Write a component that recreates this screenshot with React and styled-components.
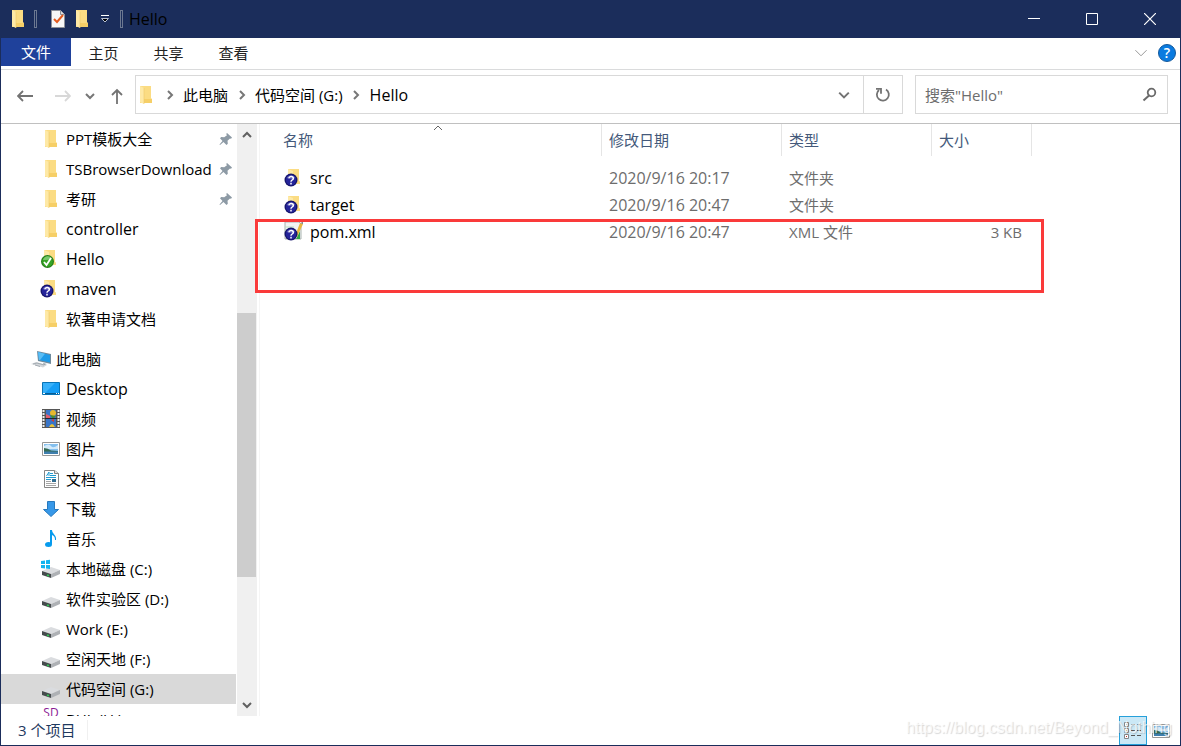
import React from "react";
import styled, { createGlobalStyle, css } from "styled-components";

const GlobalStyle = createGlobalStyle`
  * {
    box-sizing: border-box;
  }

  body {
    margin: 0;
    color: #000;
    background: #fff;
    font: 15px/20px "Open Sans", "Noto Sans CJK SC", sans-serif;
  }

  button,
  input {
    margin: 0;
    padding: 0;
    border: 0;
    background: none;
    font: inherit;
    color: inherit;
  }

  a {
    color: inherit;
    text-decoration: none;
  }

  svg {
    display: block;
    flex: none;
  }
`;

const Window = styled.div`
  display: flex;
  flex-direction: column;
  height: 100vh;
  border: 1px solid #1b2d5b;
  border-top: 0;
  overflow: hidden;
`;

const TitleBar = styled.header`
  display: flex;
  align-items: center;
  flex: none;
  height: 38px;
  padding: 0 1px 0 9px;
  background: #1b2d5b;
`;

const QuickButton = styled.button`
  display: flex;
  align-items: center;
  justify-content: center;
  width: ${(props) => (props.$narrow ? 20 : 25)}px;
  height: 24px;
`;

const Separator = styled.span`
  width: 3px;
  height: 18px;
  margin: 0 ${(props) => props.$after || 0}px 0 ${(props) => props.$before || 0}px;
  border: 1px solid #6c7891;
  background: #1b2d5b;
`;

const Title = styled.h1`
  flex: 1;
  margin: 0;
  font-size: 16px;
  font-weight: 400;
`;

const CaptionButton = styled.button`
  display: flex;
  align-items: center;
  justify-content: center;
  width: 58px;
  height: 38px;
`;

const Ribbon = styled.nav`
  display: flex;
  flex: none;
  height: 32px;
  border-bottom: 1px solid #dadbdc;
`;

const RibbonTab = styled.button`
  width: 65px;
  height: 30px;
  color: #222;

  ${(props) =>
    props.$file &&
    css`
      width: 70px;
      height: 28px;
      color: #fff;
      background: #1f419b;
    `}
`;

const RibbonTools = styled.div`
  display: flex;
  align-items: center;
  gap: 10px;
  height: 30px;
  margin-left: auto;
  padding-right: 4px;
`;

const HelpButton = styled.button`
  width: 18px;
  height: 18px;
  border: 1px solid #14599c;
  border-radius: 50%;
  color: #fff;
  background: #0a7be0;
  font-size: 14px;
  font-weight: 600;
  line-height: 16px;
`;

const AddressRow = styled.div`
  display: flex;
  align-items: center;
  flex: none;
  height: 54px;
  padding: 0 12px 4px 0;
  border-bottom: 1px solid #c0c0c0;
`;

const HistoryButtons = styled.div`
  display: flex;
  align-items: center;
  gap: 14px;
  width: 134px;
  padding: 2px 0 0 16px;

  button:first-child {
    margin-right: 8px;
  }
`;

const AddressBox = styled.div`
  display: flex;
  flex: 1;
  height: 39px;
  border: 1px solid #d9d9d9;
`;

const Crumbs = styled.div`
  display: flex;
  align-items: center;
  flex: 1;
  padding-left: 2px;
`;

const Crumb = styled.a`
  font-size: ${(props) => (props.$latin ? 16 : 15)}px;
`;

const CrumbArrow = styled.span`
  display: flex;
  justify-content: center;
  width: 27px;
`;

const BoxButton = styled.button`
  display: flex;
  align-items: center;
  justify-content: center;
  width: 39px;
  border-left: ${(props) => (props.$divided ? "1px solid #d9d9d9" : "0")};
`;

const SearchBox = styled.div`
  display: flex;
  align-items: center;
  width: 253px;
  height: 39px;
  margin-left: 12px;
  padding: 0 10px 0 9px;
  border: 1px solid #d9d9d9;

  input {
    flex: 1;
    min-width: 0;
    outline: 0;
  }

  input::placeholder {
    color: #6d6d6d;
    opacity: 1;
  }
`;

const Body = styled.div`
  display: flex;
  flex: 1;
  min-height: 0;
`;

const Sidebar = styled.nav`
  width: 235px;
  flex: none;
  overflow: hidden;
`;

const TreeList = styled.ul`
  margin: 0 0 10px;
  padding: 0;
  list-style: none;
`;

const TreeLink = styled.a`
  display: flex;
  align-items: center;
  height: 30px;
  padding: 0 3px 0 ${(props) => (props.$root ? 30 : 39)}px;
  background: ${(props) => (props.$selected ? "#d9d9d9" : "transparent")};
  font-size: ${(props) => (props.$latin ? 16 : 15)}px;
  white-space: nowrap;

  > :first-child {
    margin-right: ${(props) => (props.$root ? 3 : 4)}px;
  }

  > :nth-child(3) {
    margin-left: auto;
  }
`;

const ScrollTrack = styled.div`
  display: flex;
  flex-direction: column;
  align-items: center;
  justify-content: space-between;
  flex: none;
  width: 20px;
  margin-left: 1px;
  padding: 6px 0;
  background: linear-gradient(#cdcdcd, #cdcdcd) 0 189px / 19px 264px no-repeat
    #f0f0f0;
`;

const Main = styled.main`
  position: relative;
  flex: 1;
  min-width: 0;
  margin-left: 2px;
  border-left: 1px solid #f5f5f5;
`;

const FileTable = styled.table`
  width: 772px;
  table-layout: fixed;
  border-collapse: separate;
  border-spacing: 0;

  th {
    height: 32px;
    padding: 0 7px;
    border-right: 1px solid #e5e5e5;
    color: #44597a;
    font-weight: 400;
    text-align: left;
  }

  th:first-child {
    padding-left: 23px;
  }

  td {
    height: 27px;
    padding: 0 7px;
    color: #6d6d6d;
  }

  td:first-child {
    padding-left: 24px;
    color: #000;
  }

  td:nth-child(-n + 2) {
    font-size: 16px;
  }

  td:last-child {
    padding-right: 10px;
    text-align: right;
  }

  tbody::before {
    content: "";
    display: block;
    height: 8px;
  }
`;

const FileName = styled.a`
  display: flex;
  align-items: center;
  gap: 6px;
`;

const SortMark = styled.span`
  position: absolute;
  top: -1px;
  left: 173px;
`;

const Highlight = styled.div`
  position: absolute;
  top: 95px;
  left: -5px;
  width: 789px;
  height: 74px;
  border: 3px solid #fa3a3a;
`;

const StatusBar = styled.footer`
  position: relative;
  display: flex;
  align-items: center;
  flex: none;
  height: 29px;
  padding-left: 17px;
  color: #1f3a5f;
`;

const Count = styled.span`
  margin-bottom: 2px;
  padding-right: 12px;
  border-right: 1px solid #f0f0f0;
`;

const ViewButton = styled.button`
  display: flex;
  align-items: center;
  justify-content: center;
  width: 28px;
  height: 29px;
  margin-left: ${(props) => (props.$active ? "auto" : "0")};
  border: ${(props) => (props.$active ? "1px solid #26a0da" : "0")};
  background: ${(props) => (props.$active ? "#cbe8f6" : "transparent")};

  &:last-of-type {
    margin-right: 5px;
  }
`;

const Watermark = styled.span`
  position: absolute;
  right: 8px;
  bottom: 7px;
  color: rgba(255, 255, 255, 0.7);
  font: 16px/20px "Liberation Sans", sans-serif;
  text-shadow: 1px 1px 1px rgba(0, 0, 0, 0.16);
  pointer-events: none;
`;

const Chevron = ({ dir = "down", size = 10, color = "#606060", weight = 2 }) => {
  const paths = {
    down: "M1 3l4 4 4-4",
    up: "M1 7l4-4 4 4",
    right: "M3 1l4 4-4 4",
  };
  return (
    <svg width={size} height={size} viewBox="0 0 10 10" fill="none">
      <path d={paths[dir]} stroke={color} strokeWidth={(weight * 10) / size} />
    </svg>
  );
};

const Arrow = ({ dir, color = "#737373" }) => {
  const paths = {
    left: "M16 8H1M6 3L1 8l5 5",
    right: "M0 8h15M10 3l5 5-5 5",
    up: "M8 16V2M3 7l5-5 5 5",
  };
  return (
    <svg width="16" height="16" viewBox="0 0 16 16" fill="none">
      <path d={paths[dir]} stroke={color} strokeWidth="1.8" />
    </svg>
  );
};

const FolderShape = () => (
  <>
    <path d="M5 1h11v12l1 1v4H5z" fill="#fbdc83" />
    <path d="M5 1l4 2v16l-4-2z" fill="#fee9a6" />
    <path d="M9 14h8v4H9z" fill="#f6cf67" />
    <path d="M9 3v16" stroke="#efca6a" strokeWidth=".6" />
  </>
);

const FolderIcon = () => (
  <svg width="22" height="20" viewBox="0 0 22 20">
    <FolderShape />
  </svg>
);

const TitleFolderIcon = () => (
  <svg width="18" height="20" viewBox="3 0 18 20">
    <FolderShape />
  </svg>
);

const QuestionBadge = ({ x = 7, y = 13 }) => (
  <g transform={`translate(${x} ${y})`}>
    <circle r="6.5" fill="#15146b" />
    <circle r="5.2" fill="#25249a" />
    <path d="M-4.5-2a5 5 0 0 1 9 0q-4 2-9 0z" fill="#5d5db8" />
    <path
      d="M-2-1.7C-2-4 2.3-4 2.3-1.6 2.3 0 0 0 0 1.7M0 2.8v1.7"
      fill="none"
      stroke="#fff"
      strokeWidth="1.5"
    />
  </g>
);

const QuestionFolderIcon = ({ width = 22 }) => (
  <svg width={width} height="22" viewBox={`0 0 ${width} 22`}>
    <path d="M4 2h11v12l1 .5V17H6z" fill="#fbdc83" />
    <path d="M4 2l5 2v13l-5-2z" fill="#fee9a6" />
    <QuestionBadge y={13} />
  </svg>
);

const CheckFolderIcon = () => (
  <svg width="22" height="22" viewBox="0 0 22 22">
    <path d="M4 2h11v12l1 .5V17H6z" fill="#fbdc83" />
    <path d="M4 2l5 2v13l-5-2z" fill="#fee9a6" />
    <circle cx="7.5" cy="13.5" r="6.5" fill="#247d18" />
    <circle cx="7.5" cy="13.5" r="5.3" fill="#37a426" />
    <path d="M3 12a5 5 0 0 1 9-1.5q-4 2-9 1.5z" fill="#78c76b" />
    <path d="M4 14l2.5 3L11 10" fill="none" stroke="#fff" strokeWidth="1.8" />
  </svg>
);

const XmlIcon = () => (
  <svg width="20" height="22" viewBox="0 0 20 22">
    <path d="M1 1h14l2 2v15H1z" fill="#f2f5f4" stroke="#a9b3b0" />
    <path d="M12 18l4-8v8z" fill="#2fa646" />
    <path d="M11 15l5-13 3 1-6 13z" fill="#e8b73e" />
    <path d="M16 2l3-1v2z" fill="#777" />
    <path d="M1 6h9M1 9h7" stroke="#b9dfc0" />
    <QuestionBadge />
  </svg>
);

const PinIcon = () => (
  <svg width="14" height="14" viewBox="0 0 14 14" fill="#8d9aa5">
    <path d="M8 1l5 4.5-1 1.3-1-.3-2.5 2.3.3 3L7.500 13l-3-3L1 13l-.5-.5L3.500 9 1 6.300 2.200 5l3 .3L8 3.200 7.200 2z" />
  </svg>
);

const PcIcon = () => (
  <svg width="22" height="20" viewBox="0 0 22 20">
    <path d="M6 2l14 3v10L7 12z" fill="#6f8a9c" />
    <path d="M7 3l12 3v7.5L8 11z" fill="#1f9be8" />
    <path d="M7 3l7 1.700L9 11H8z" fill="#59bdf5" />
    <path d="M0 15l5-2 11 3-4 2.500z" fill="#d3d7db" />
    <path d="M2 15l4-1 7 2M4 16l5 1.500" stroke="#a4abb1" fill="none" />
    <path d="M12 14l4 1-3 1z" fill="#8b98a3" />
  </svg>
);

const DesktopIcon = () => (
  <svg width="22" height="20" viewBox="0 0 22 20">
    <path d="M2.500 3.500h17v12h-17z" fill="#159df5" stroke="#0873b5" />
    <path d="M3 4h12L5 14H3z" fill="#38b1fa" />
    <path d="M3 14.500h16" stroke="#075d93" />
    <path d="M3 14.500h2M16 14.500h1M18 14.500h1" stroke="#fff" />
  </svg>
);

const VideoIcon = () => (
  <svg width="22" height="20" viewBox="0 0 22 20">
    <path d="M2 0h18v19H2z" fill="#565656" />
    <path d="M3.500 1v18M18.500 1v18" stroke="#eee" strokeWidth="2" strokeDasharray="2 1" />
    <path d="M6 1h10v8H6zM6 10h10v8H6z" fill="#3975c8" />
    <path d="M6 5l4 2v2H6z" fill="#e25d6e" />
    <circle cx="13" cy="4" r="3" fill="#e6b82d" />
    <path d="M10 6l6 1-3 3z" fill="#4a8d2c" />
    <path d="M11 11l3-1v3z" fill="#d83b31" />
    <path d="M9 18q3-6 6 0z" fill="#e9c33a" />
    <path d="M5 9.500h12" stroke="#1f2732" />
  </svg>
);

const PictureIcon = () => (
  <svg width="22" height="20" viewBox="0 0 22 20">
    <path d="M2.500 3.500h17v13h-17z" fill="#fff" stroke="#979797" />
    <path d="M4 5h14v10H4z" fill="#83bfee" />
    <path d="M4 7q5-3 7 0t7-1v4H4z" fill="#d3eafa" />
    <path d="M4 9q4 0 7 2.500l7 .5v1H4z" fill="#356b55" />
    <path d="M4 12.500h14V15H4z" fill="#3f7fae" />
  </svg>
);

const DocumentIcon = () => (
  <svg width="22" height="20" viewBox="0 0 22 20">
    <path d="M4.500 1.500h10l4 3v14h-14z" fill="#fff" stroke="#858585" />
    <path d="M14.500 1.500v3h4" fill="#e5e5e5" stroke="#858585" />
    <path d="M6.500 7l2.500-4v4M10 4.500h3M10 6.500h6M6 8.500h10M6 10.500h5" stroke="#219bd0" fill="none" />
    <path d="M6 12.500h5M6 14.500h10M6 16.500h10" stroke="#a5a5a5" />
    <path d="M12 10h4v3h-4z" fill="#316d91" />
  </svg>
);

const DownloadIcon = () => (
  <svg width="22" height="20" viewBox="0 0 22 20">
    <path d="M7.500 2.500h7v8h4L11 17.500l-7.500-7h4z" fill="#3798e8" stroke="#2779bd" />
  </svg>
);

const MusicIcon = () => (
  <svg width="22" height="20" viewBox="0 0 22 20" fill="#079bed">
    <path d="M10 1h2c0 4 5 5 4 10h-1c0-3-1-4-3-5v9h-2z" />
    <ellipse cx="8.500" cy="15.500" rx="3.500" ry="2.500" />
  </svg>
);

const DriveIcon = ({ system }) => (
  <svg width="22" height="20" viewBox="0 0 22 20">
    <path d="M2 12l9-4 9 3-9 4z" fill="#dadcdf" />
    <path d="M2 12l9 3v4l-9-3z" fill="#454b4d" />
    <path d="M11 15l9-4v4l-9 4z" fill="#aeb1b5" />
    <path d="M7 16l2 .7" stroke="#31c953" strokeWidth="1.500" />
    {system && (
      <path d="M1 2l4-.5V5H1zM6 1.300l4-.5V5H6zM1 6h4v3.500L1 9zM6 6h4v4l-4-.5z" fill="#11b4ef" />
    )}
  </svg>
);

const SdLabel = styled.span`
  align-self: flex-start;
  width: 22px;
  color: #8a1a94;
  font-size: 12px;
  line-height: 18px;
  text-align: center;
`;

const TaskIcon = () => (
  <svg width="16" height="20" viewBox="0 0 16 20">
    <path d="M1.500 1.500h9l4 4v13h-13z" fill="#f7f7f7" stroke="#8d9098" />
    <path d="M10.500 1.500v4h4" fill="#ddd" stroke="#8d9098" />
    <path d="M4 10l3 3 6-7" stroke="#e45b1e" strokeWidth="2" fill="none" />
  </svg>
);

const quickAccess = [
  { name: "PPT模板大全", icon: <FolderIcon />, pinned: true },
  { name: "TSBrowserDownload", icon: <FolderIcon />, pinned: true },
  { name: "考研", icon: <FolderIcon />, pinned: true },
  { name: "controller", icon: <FolderIcon />, latin: true },
  { name: "Hello", icon: <CheckFolderIcon />, latin: true },
  { name: "maven", icon: <QuestionFolderIcon />, latin: true },
  { name: "软著申请文档", icon: <FolderIcon /> },
];

const thisPc = [
  { name: "此电脑", icon: <PcIcon />, root: true },
  { name: "Desktop", icon: <DesktopIcon />, latin: true },
  { name: "视频", icon: <VideoIcon /> },
  { name: "图片", icon: <PictureIcon /> },
  { name: "文档", icon: <DocumentIcon /> },
  { name: "下载", icon: <DownloadIcon /> },
  { name: "音乐", icon: <MusicIcon /> },
  { name: "本地磁盘 (C:)", icon: <DriveIcon system /> },
  { name: "软件实验区 (D:)", icon: <DriveIcon /> },
  { name: "Work (E:)", icon: <DriveIcon /> },
  { name: "空闲天地 (F:)", icon: <DriveIcon /> },
  { name: "代码空间 (G:)", icon: <DriveIcon />, selected: true },
  { name: "BHL (H:)", icon: <SdLabel>SD</SdLabel> },
];

const files = [
  { name: "src", date: "2020/9/16 20:17", type: "文件夹", size: "", icon: <QuestionFolderIcon width={20} /> },
  { name: "target", date: "2020/9/16 20:47", type: "文件夹", size: "", icon: <QuestionFolderIcon width={20} /> },
  { name: "pom.xml", date: "2020/9/16 20:47", type: "XML 文件", size: "3 KB", icon: <XmlIcon /> },
];

const Tree = ({ items }) => (
  <TreeList>
    {items.map((item) => (
      <li key={item.name}>
        <TreeLink
          href="#"
          $root={item.root}
          $latin={item.latin}
          $selected={item.selected}
        >
          {item.icon}
          <span>{item.name}</span>
          {item.pinned && <PinIcon />}
        </TreeLink>
      </li>
    ))}
  </TreeList>
);

const App = () => (
  <>
    <GlobalStyle />
    <Window>
      <TitleBar>
        <TitleFolderIcon />
        <Separator $before={6} $after={8} />
        <QuickButton aria-label="属性">
          <TaskIcon />
        </QuickButton>
        <QuickButton aria-label="新建文件夹">
          <TitleFolderIcon />
        </QuickButton>
        <QuickButton $narrow aria-label="自定义快速访问工具栏">
          <svg width="8" height="8" viewBox="0 0 8 8">
            <path d="M0 .5h8" stroke="#fff" />
            <path d="M.5 3.500h7L4 7z" fill="#000" stroke="#b8c0d0" />
          </svg>
        </QuickButton>
        <Separator $before={5} $after={6} />
        <Title>Hello</Title>
        <CaptionButton aria-label="最小化">
          <svg width="12" height="12" viewBox="0 0 12 12">
            <path d="M0 5.500h12" stroke="#fff" />
          </svg>
        </CaptionButton>
        <CaptionButton aria-label="最大化">
          <svg width="12" height="12" viewBox="0 0 12 12">
            <path d="M.5.500h11v11H.5z" fill="none" stroke="#fff" />
          </svg>
        </CaptionButton>
        <CaptionButton aria-label="关闭">
          <svg width="12" height="12" viewBox="0 0 12 12">
            <path d="M0 0l12 12M12 0L0 12" stroke="#fff" strokeWidth="1.2" />
          </svg>
        </CaptionButton>
      </TitleBar>

      <Ribbon>
        <RibbonTab $file>文件</RibbonTab>
        <RibbonTab>主页</RibbonTab>
        <RibbonTab>共享</RibbonTab>
        <RibbonTab>查看</RibbonTab>
        <RibbonTools>
          <button aria-label="展开功能区">
            <Chevron size={14} color="#999" weight={1} />
          </button>
          <HelpButton aria-label="帮助">?</HelpButton>
        </RibbonTools>
      </Ribbon>

      <AddressRow>
        <HistoryButtons>
          <button aria-label="后退">
            <Arrow dir="left" />
          </button>
          <button aria-label="前进">
            <Arrow dir="right" color="#d8d8d8" />
          </button>
          <button aria-label="最近浏览的位置">
            <Chevron color="#777" />
          </button>
          <button aria-label="上移">
            <Arrow dir="up" />
          </button>
        </HistoryButtons>
        <AddressBox>
          <Crumbs>
            <TitleFolderIcon />
            <CrumbArrow>
              <Chevron dir="right" color="#777" />
            </CrumbArrow>
            <Crumb href="#">此电脑</Crumb>
            <CrumbArrow>
              <Chevron dir="right" color="#777" />
            </CrumbArrow>
            <Crumb href="#">代码空间 (G:)</Crumb>
            <CrumbArrow>
              <Chevron dir="right" color="#777" />
            </CrumbArrow>
            <Crumb href="#" $latin>
              Hello
            </Crumb>
          </Crumbs>
          <BoxButton aria-label="以前的位置">
            <Chevron size={12} color="#737373" />
          </BoxButton>
          <BoxButton $divided aria-label="刷新">
            <svg width="16" height="16" viewBox="0 0 16 16" fill="none">
              <path d="M11 2.500a6 6 0 1 1-7 .5" stroke="#737373" strokeWidth="1.800" />
              <path d="M1 1.800h5v5" stroke="#737373" strokeWidth="1.800" />
            </svg>
          </BoxButton>
        </AddressBox>
        <SearchBox>
          <input type="search" aria-label="搜索" placeholder={'搜索"Hello"'} />
          <svg width="15" height="15" viewBox="0 0 15 15" fill="none">
            <circle cx="9.500" cy="5.500" r="3.800" stroke="#6a6a6a" strokeWidth="1.800" />
            <path d="M7 8.500l-5.500 5" stroke="#6a6a6a" strokeWidth="2" />
          </svg>
        </SearchBox>
      </AddressRow>

      <Body>
        <Sidebar>
          <Tree items={quickAccess} />
          <Tree items={thisPc} />
        </Sidebar>
        <ScrollTrack>
          <Chevron dir="up" />
          <Chevron />
        </ScrollTrack>
        <Main>
          <FileTable>
            <colgroup>
              <col width="342" />
              <col width="180" />
              <col width="150" />
              <col width="100" />
            </colgroup>
            <thead>
              <tr>
                <th>名称</th>
                <th>修改日期</th>
                <th>类型</th>
                <th>大小</th>
              </tr>
            </thead>
            <tbody>
              {files.map((file) => (
                <tr key={file.name}>
                  <td>
                    <FileName href="#">
                      {file.icon}
                      {file.name}
                    </FileName>
                  </td>
                  <td>{file.date}</td>
                  <td>{file.type}</td>
                  <td>{file.size}</td>
                </tr>
              ))}
            </tbody>
          </FileTable>
          <SortMark>
            <Chevron dir="up" color="#666" weight={1} />
          </SortMark>
          <Highlight />
        </Main>
      </Body>

      <StatusBar>
        <Count>3 个项目</Count>
        <ViewButton $active aria-label="详细信息">
          <svg width="18" height="17" viewBox="0 0 18 17" fill="none">
            <path d="M.5.500h4v4h-4zM.5 6.500h4v4h-4zM.5 12.500h4v4h-4z" fill="#fff" stroke="#858585" />
            <path d="M7 2.500h4M13 2.500h4M7 8.500h4M13 8.500h4M7 13.500h4M13 13.500h4" stroke="#555" />
            <path d="M2 2.500h1" stroke="#268bc5" />
            <path d="M2 8.500h1" stroke="#8d7422" />
            <path d="M2 14.500h1" stroke="#c53022" />
          </svg>
        </ViewButton>
        <ViewButton aria-label="大缩略图">
          <PictureIcon />
        </ViewButton>
        <Watermark>https://blog.csdn.net/Beyond_Nothing</Watermark>
      </StatusBar>
    </Window>
  </>
);

export default App;
